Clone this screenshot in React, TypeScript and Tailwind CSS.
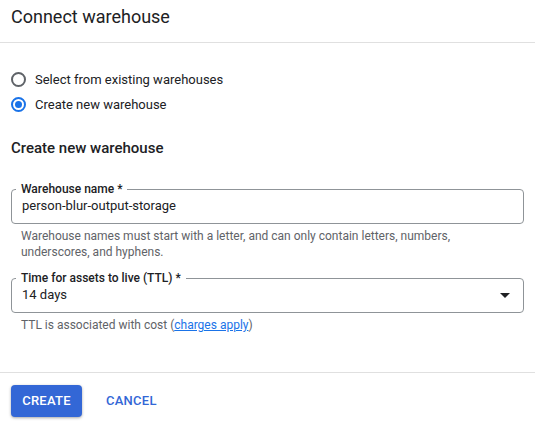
import { useState } from "react";

function Radio({ checked, label, onClick }: { checked: boolean; label: string; onClick: () => void }) {
  return (
    <label className="flex items-center h-[25px] cursor-pointer" onClick={onClick}>
      <span
        className={
          checked
            ? "w-[15px] h-[15px] rounded-full border-2 border-[#1a73e8] flex items-center justify-center"
            : "w-[15px] h-[15px] rounded-full border-2 border-[#5f6368] flex items-center justify-center"
        }
      >
        {checked && <span className="w-[7px] h-[7px] rounded-full bg-[#1a73e8]" />}
      </span>
      <span className="ml-[9px] text-[13px] leading-[20px] text-[#202124]">{label}</span>
    </label>
  );
}

function OutlinedField({ label, children }: { label: string; children: React.ReactNode }) {
  return (
    <fieldset className="border border-[#8f9498] rounded-[4px] px-[10px] pb-[7px] min-w-0">
      <legend className="ml-[-6px] px-[5px] text-[12px] leading-[14px] font-medium text-[#202124]">{label}</legend>
      {children}
    </fieldset>
  );
}

export default function App() {
  const [mode, setMode] = useState<"existing" | "new">("new");

  return (
    <div className="w-[535px] h-[428px] bg-white flex flex-col" style={{ fontFamily: "Roboto, 'Liberation Sans', sans-serif" }}>
      <div className="h-[43px] border-b border-[#e0e0e0] px-[11px] pt-[5px]">
        <h1 className="text-[18px] leading-[24px] text-[#202124]">Connect warehouse</h1>
      </div>

      <div className="flex-1 px-[11px] pt-[24px]">
        <div className="flex flex-col">
          <Radio checked={mode === "existing"} label="Select from existing warehouses" onClick={() => setMode("existing")} />
          <Radio checked={mode === "new"} label="Create new warehouse" onClick={() => setMode("new")} />
        </div>

        <h2 className="mt-[21px] text-[15px] leading-[20px] font-medium text-[#202124]">Create new warehouse</h2>

        <div className="mt-[24px]">
          <OutlinedField label="Warehouse name *">
            <div className="text-[13px] leading-[20px] text-[#202124]">person-blur-output-storage</div>
          </OutlinedField>
          <p className="mt-[4px] px-[10px] text-[12px] leading-[16px] text-[#5f6368]">
            Warehouse names must start with a letter, and can only contain letters, numbers, underscores, and hyphens.
          </p>
        </div>

        <div className="mt-[11px]">
          <OutlinedField label="Time for assets to live (TTL) *">
            <div className="flex items-center justify-between">
              <span className="text-[13px] leading-[20px] text-[#202124]">14 days</span>
              <svg width="24" height="24" viewBox="0 0 24 24" className="mr-[-4px] my-[-2px]">
                <path d="M7 10l5 5 5-5z" fill="#202124" />
              </svg>
            </div>
          </OutlinedField>
          <p className="mt-[4px] px-[10px] text-[12px] leading-[16px] text-[#5f6368]">
            TTL is associated with cost (<a href="#" className="text-[#1a73e8] underline">charges apply</a>)
          </p>
        </div>
      </div>

      <div className="h-[56px] border-t border-[#e0e0e0] px-[11px] pt-[12px] flex items-start gap-[8px]">
        <button className="h-[32px] w-[71px] rounded-[4px] bg-[#3367d6] text-white text-[13px] font-medium tracking-[0.25px] shadow-[0_1px_3px_rgba(0,0,0,0.35)]">
          CREATE
        </button>
        <button className="h-[32px] px-[16px] rounded-[4px] text-[#3367d6] text-[13px] font-medium tracking-[0.25px]">
          CANCEL
        </button>
      </div>
    </div>
  );
}
